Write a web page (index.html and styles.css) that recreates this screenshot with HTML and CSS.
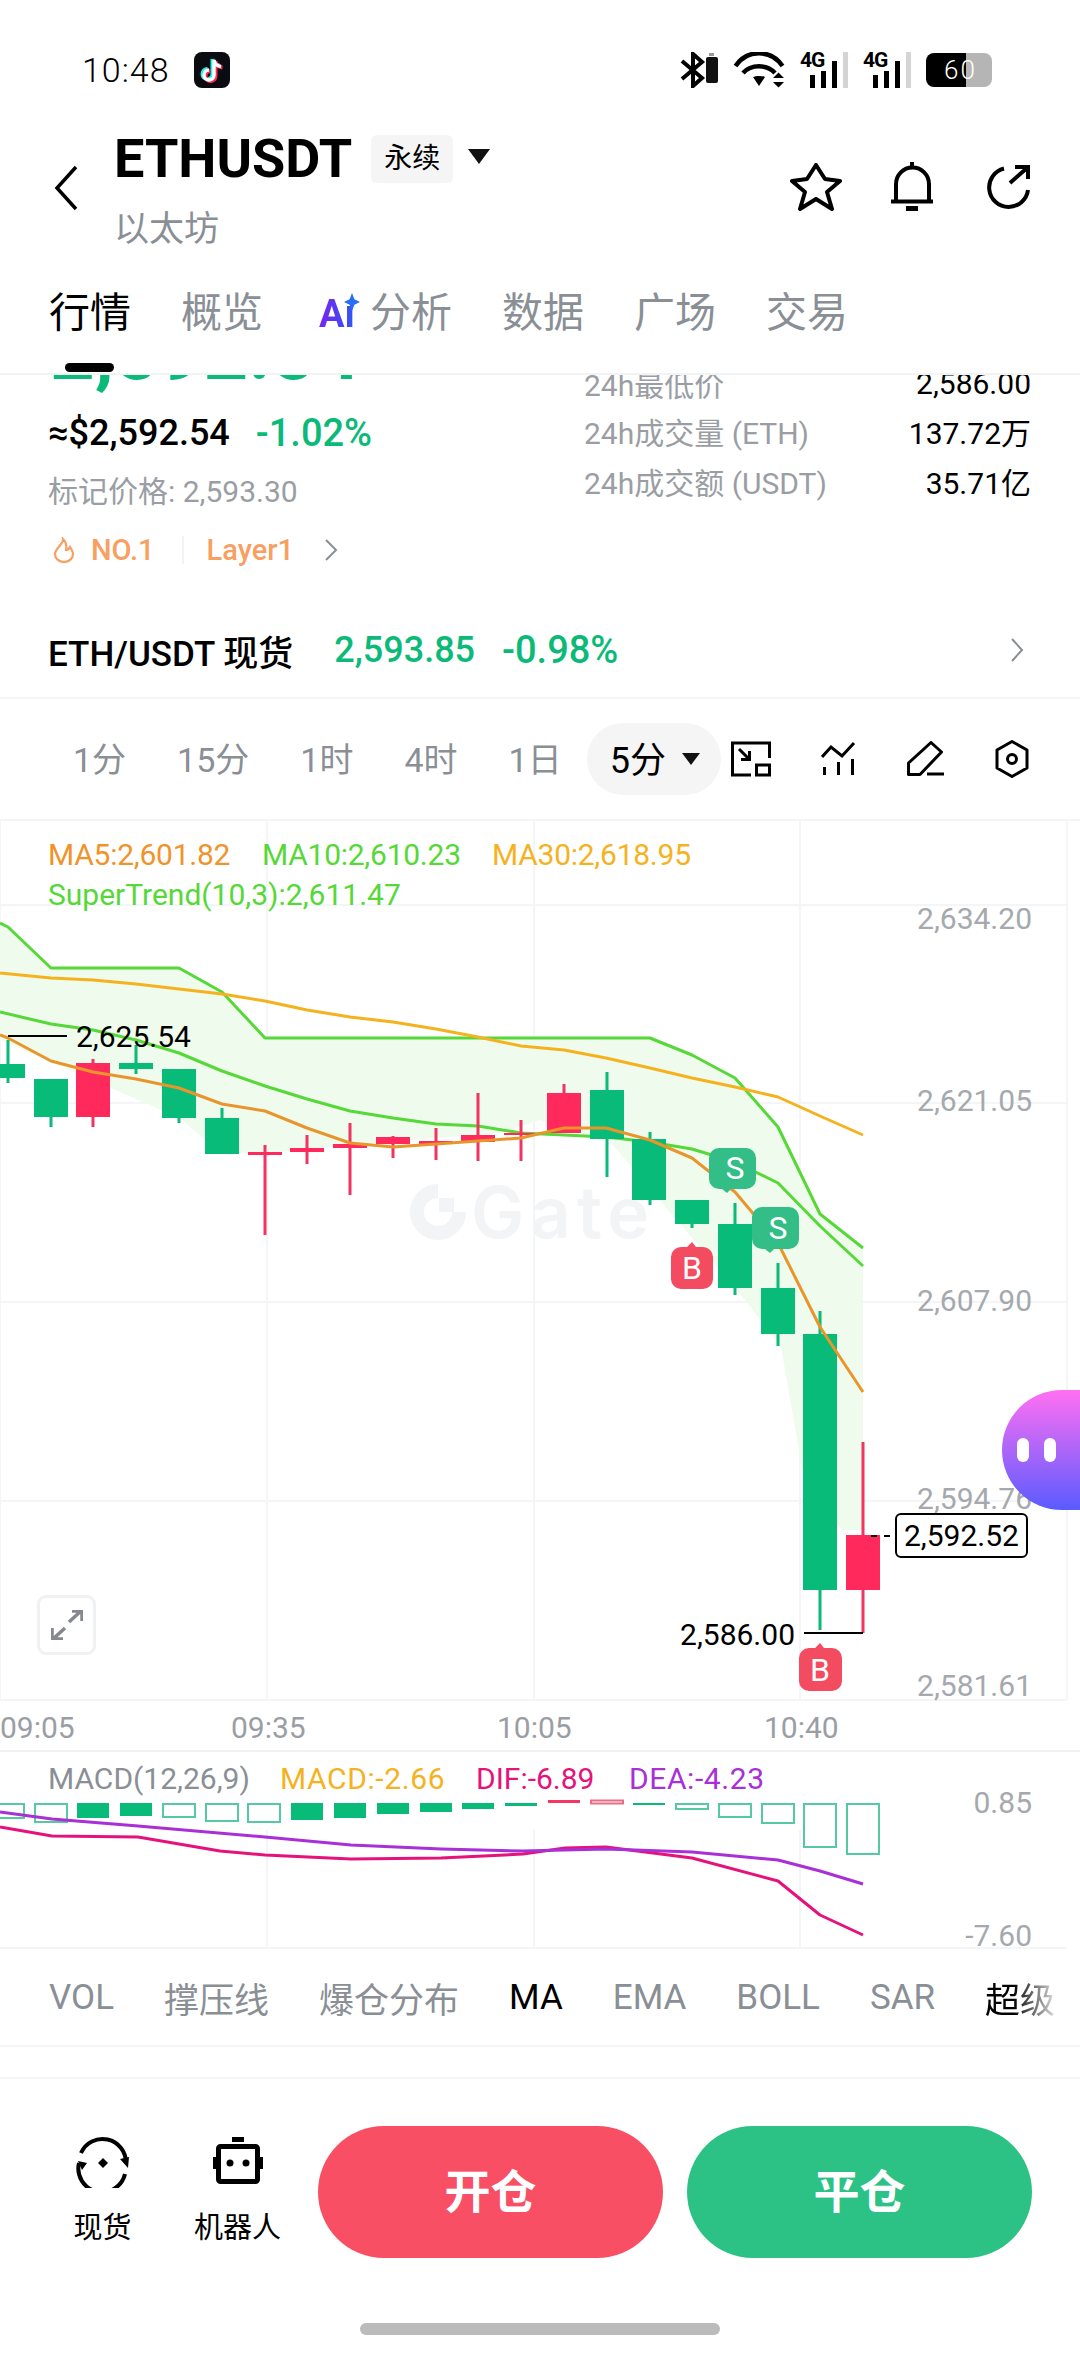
FILE: index.html
```html
<!DOCTYPE html>
<html lang="zh-CN">
<head>
  <meta charset="UTF-8" />
  <title>ETHUSDT 永续</title>
  <link rel="stylesheet" href="styles.css">
</head>
<body>
  <div class="page">

    <!-- status bar -->
    <div class="status">
      <span class="status-time">10:48</span>
      <svg class="tiktok" width="36" height="36" viewBox="0 0 36 36">
        <rect width="36" height="36" rx="8" fill="#0b0b12"/>
        <path d="M20 8v15a5 5 0 1 1-5-5M20 8c.5 4 3 6 7 6.500" fill="none" stroke="#25f4ee" stroke-width="4" transform="translate(-1.500 -1)"/>
        <path d="M20 8v15a5 5 0 1 1-5-5M20 8c.5 4 3 6 7 6.500" fill="none" stroke="#fe2c55" stroke-width="4" transform="translate(1.500 1)"/>
        <path d="M20 8v15a5 5 0 1 1-5-5M20 8c.5 4 3 6 7 6.500" fill="none" stroke="#fff" stroke-width="3.400"/>
      </svg>
      <div class="status-right">
        <svg width="38" height="36" viewBox="0 0 38 36">
          <path d="M2 9l20 17-9 8V2l9 8L2 27" fill="none" stroke="#000" stroke-width="4"/>
          <rect x="26" y="5" width="12" height="26" rx="2" fill="#111"/>
          <rect x="29" y="1" width="5" height="3" fill="#999"/>
        </svg>
        <svg class="wifi" width="52" height="36" viewBox="0 0 52 36">
          <path d="M2.500 14C14-3 38-3 49.500 14M10 21c8-9 24-9 32 0" fill="none" stroke="#000" stroke-width="4.500"/>
          <path d="M20 25c3-1.500 9-1.500 12 0l-6 9z" fill="#000"/>
          <path d="M40 26l5.500-5.500L51 26zM40 30l5.500 5.500L51 30z" fill="#000"/>
        </svg>
        <div class="signal">
          <span class="signal-label">4G</span>
          <i class="bar h1"></i><i class="bar h2"></i><i class="bar h3"></i><i class="bar h4 off"></i>
        </div>
        <div class="signal">
          <span class="signal-label">4G</span>
          <i class="bar h1"></i><i class="bar h2"></i><i class="bar h3"></i><i class="bar h4 off"></i>
        </div>
        <div class="battery"><span class="battery-num">60</span></div>
      </div>
    </div>

    <!-- title -->
    <div class="header">
      <svg class="back" width="24" height="46" viewBox="0 0 24 46">
        <path d="M22 2L3 23l19 21" fill="none" stroke="#000" stroke-width="3.500"/>
      </svg>
      <div class="title-col">
        <div class="title-row">
          <span class="symbol">ETHUSDT</span>
          <span class="perp-tag">永续</span>
          <span class="tri tri-lg"></span>
        </div>
        <div class="coin-name">以太坊</div>
      </div>
      <div class="header-icons">
        <svg width="52" height="48" viewBox="0 0 52 48">
          <path d="M26 2l9 14 15 2-13 11 5 17-16-10-16 10 5-17L2 18l15-2z" fill="none" stroke="#000" stroke-width="4" stroke-linejoin="round"/>
        </svg>
        <svg width="44" height="52" viewBox="0 0 44 52">
          <path d="M6 40V23a16.500 16.500 0 0 1 33 0v17" fill="none" stroke="#000" stroke-width="4"/>
          <path d="M1 40.500h42" stroke="#000" stroke-width="4"/>
          <path d="M22 1v7" stroke="#000" stroke-width="4"/>
          <path d="M16 47.500h12" stroke="#000" stroke-width="5"/>
        </svg>
        <svg class="share" width="46" height="44" viewBox="0 0 46 44">
          <path d="M19 3.500A19.500 19.500 0 1 0 43 25" fill="none" stroke="#000" stroke-width="4"/>
          <path d="M25 18L42 3M30 2h13v12" fill="none" stroke="#000" stroke-width="4"/>
        </svg>
      </div>
    </div>

    <!-- section tabs -->
    <div class="tabs">
      <span class="tab active">行情</span>
      <span class="tab">概览</span>
      <span class="tab tab-ai"><b class="ai-mark">Aı</b>分析</span>
      <span class="tab">数据</span>
      <span class="tab">广场</span>
      <span class="tab">交易</span>
    </div>

    <!-- price summary, scrolled under the tabs -->
    <div class="summary">
      <div class="quote">
        <div class="quote-left">
          <div class="big-price">2,592.54</div>
          <div class="fiat-row">
            <span class="fiat">≈$2,592.54</span>
            <span class="green-num">-1.02%</span>
          </div>
          <div class="mark-price">标记价格: 2,593.30</div>
          <div class="tag-row">
            <svg width="24" height="26" viewBox="0 0 24 26">
              <path d="M11 2c1 5-8 9-8 15a9 8 0 0 0 18 0c0-3-2-5-3-7-1 2-2 3-4 3 1-4 0-8-3-11z" fill="none" stroke="#f7a062" stroke-width="2.200"/>
            </svg>
            <span class="tag-text">NO.1</span>
            <i class="tag-divider"></i>
            <span class="tag-text">Layer1</span>
            <svg class="tag-chevron" width="14" height="22" viewBox="0 0 14 22">
              <path d="M2 1l10 10L2 21" fill="none" stroke="#8a8f96" stroke-width="2"/>
            </svg>
          </div>
        </div>
        <div class="stats">
          <div class="stat"><span class="stat-label">24h最低价</span><span class="stat-value">2,586.00</span></div>
          <div class="stat"><span class="stat-label">24h成交量 (ETH)</span><span class="stat-value">137.72万</span></div>
          <div class="stat"><span class="stat-label">24h成交额 (USDT)</span><span class="stat-value">35.71亿</span></div>
        </div>
      </div>
      <div class="spot-row">
        <span class="spot-name">ETH/USDT 现货</span>
        <span class="spot-price">2,593.85</span>
        <span class="spot-change">-0.98%</span>
        <svg class="spot-chevron" width="14" height="24" viewBox="0 0 14 24">
          <path d="M2 1l10 11L2 23" fill="none" stroke="#8a8f96" stroke-width="2"/>
        </svg>
      </div>
    </div>

    <!-- timeframes -->
    <div class="frames">
      <span class="frame">1分</span>
      <span class="frame">15分</span>
      <span class="frame">1时</span>
      <span class="frame">4时</span>
      <span class="frame">1日</span>
      <span class="frame-pill"><span class="pill-text">5分</span><span class="tri tri-sm"></span></span>
      <svg class="tool" width="40" height="36" viewBox="0 0 40 36">
        <path d="M20 34H1.500V2h37v15" fill="none" stroke="#000" stroke-width="3"/>
        <rect x="25.500" y="24" width="13" height="10" fill="none" stroke="#000" stroke-width="3"/>
        <path d="M8 8l10 10M18.500 10v8.500H10" fill="none" stroke="#000" stroke-width="3"/>
      </svg>
      <svg class="tool" width="36" height="36" viewBox="0 0 36 36">
        <path d="M1 16L10 6l11 9L33 2" fill="none" stroke="#000" stroke-width="3"/>
        <path d="M3.500 26v8M17.500 21v13M31.500 18v16" fill="none" stroke="#000" stroke-width="3"/>
      </svg>
      <svg class="tool" width="38" height="36" viewBox="0 0 38 36">
        <path d="M1.500 22L24 1.500 34.500 11 13 33.500H1.500z" fill="none" stroke="#000" stroke-width="3" stroke-linejoin="round"/>
        <path d="M20 33h17" stroke="#000" stroke-width="3"/>
      </svg>
      <svg class="tool" width="34" height="38" viewBox="0 0 34 38">
        <path d="M17 1.500l15 8.500v18l-15 8.500-15-8.500V10z" fill="none" stroke="#000" stroke-width="3" stroke-linejoin="round"/>
        <circle cx="17" cy="19" r="4.500" fill="none" stroke="#000" stroke-width="3"/>
      </svg>
    </div>

    <!-- main chart: the viewBox uses page coordinates -->
    <div class="chart">
      <svg class="chart-svg" width="1080" height="929" viewBox="0 821 1080 929">
        <g class="grid">
          <path d="M0 905H1067M0 1103H1067M0 1302H1067M0 1501H1067M0 1700H1067"/>
          <path d="M267 821V1700M534 821V1700M800 821V1700M1067 821V1700M0 821V1700"/>
        </g>

        <g class="watermark">
          <path d="M438 1191A21 21 0 1 0 459 1212" fill="none" stroke-width="14"/>
          <rect x="439" y="1198" width="15" height="14"/>
          <text x="471" y="1238" class="watermark-text">Gate</text>
        </g>

        <path class="band" d="M0 923L8 927 51 968H179L222 992 265 1038H650L692 1055 735 1078 778 1127 820 1214 863 1248V1530H842L803 1473 781 1347 745 1300 606 1137 560 1132 540 1120 500 1133 350 1145 250 1155 205 1140 180 1118 0 1040z"/>

        <path class="line st" d="M0 923L8 927 51 968H179L222 992 265 1038H650L692 1055 735 1078 778 1127 820 1214 863 1248"/>
        <path class="line st" d="M0 1012L51 1024 93 1030 136 1040 179 1053 222 1071 265 1086 307 1099 350 1111 393 1118 436 1124 478 1126 521 1133 564 1135 606 1137 650 1142 692 1149 735 1162 778 1183 820 1226 863 1266"/>
        <path class="line ma30" d="M0 973L51 978 93 980 136 984 179 989 222 994 265 1001 307 1010 350 1017 393 1022 436 1029 478 1037 521 1046 564 1050 606 1058 650 1068 692 1078 735 1087 778 1097 820 1116 863 1135"/>

        <path class="wick wick-up" d="M8 1040V1083M51 1117V1127M136 1045V1074M179 1118V1123M222 1108V1118M607 1072V1177M650 1132V1205M692 1224V1228M735 1203V1295M778 1263V1346M820 1311V1630"/>
        <path class="wick wick-down" d="M93 1059V1127M265 1145V1235M307 1135V1164M350 1123V1195M393 1136V1158M436 1128V1160M478 1093V1161M521 1120V1161M564 1084V1133M863 1442V1633"/>
        <g class="candle-up">
          <rect x="-9" y="1064" width="34" height="14"/>
          <rect x="34" y="1079" width="34" height="38"/>
          <rect x="119" y="1063" width="34" height="6"/>
          <rect x="162" y="1069" width="34" height="49"/>
          <rect x="205" y="1118" width="34" height="36"/>
          <rect x="590" y="1090" width="34" height="49"/>
          <rect x="632" y="1139" width="34" height="61"/>
          <rect x="675" y="1200" width="34" height="24"/>
          <rect x="718" y="1224" width="34" height="64"/>
          <rect x="761" y="1288" width="34" height="46"/>
          <rect x="803" y="1334" width="34" height="256"/>
        </g>
        <g class="candle-down">
          <rect x="76" y="1063" width="34" height="54"/>
          <rect x="248" y="1152" width="34" height="3"/>
          <rect x="290" y="1148" width="34" height="4"/>
          <rect x="333" y="1144" width="34" height="4"/>
          <rect x="376" y="1137" width="34" height="7"/>
          <rect x="419" y="1141" width="34" height="3"/>
          <rect x="461" y="1135" width="34" height="7"/>
          <rect x="504" y="1133" width="34" height="2"/>
          <rect x="547" y="1093" width="34" height="40"/>
          <rect x="846" y="1535" width="34" height="55"/>
        </g>

        <path class="line ma5" d="M0 1035L8 1038 51 1061 93 1072 136 1079 179 1088 222 1104 265 1111 307 1128 350 1143 393 1147 436 1144 478 1141 521 1138 564 1128 606 1128 650 1140 692 1158 735 1192 778 1243 820 1327 863 1392"/>

        <text x="48" y="865" class="legend tight ma5-text">MA5:2,601.82</text>
        <text x="262" y="865" class="legend tight st-text">MA10:2,610.23</text>
        <text x="492" y="865" class="legend tight ma30-text">MA30:2,618.95</text>
        <text x="48" y="905" class="legend st-text">SuperTrend(10,3):2,611.47</text>

        <text x="1032" y="929" class="axis">2,634.20</text>
        <text x="1032" y="1111" class="axis">2,621.05</text>
        <text x="1032" y="1311" class="axis">2,607.90</text>
        <text x="1032" y="1509" class="axis">2,594.76</text>
        <text x="1032" y="1696" class="axis">2,581.61</text>

        <path class="pointer" d="M8 1036H67"/>
        <text x="76" y="1047" class="price-note">2,625.54</text>
        <path class="pointer" d="M804 1633H863"/>
        <text x="795" y="1645" class="price-note note-end">2,586.00</text>

        <g class="mark mark-sell">
          <path d="M724 1148h22a10 10 0 0 1 10 10v21a10 10 0 0 1-10 10h-15l-4 4-5-4h-3a10 10 0 0 1-10-10v-21a10 10 0 0 1 10-10z"/>
          <text x="735" y="1179">S</text>
        </g>
        <g class="mark mark-sell">
          <path d="M767 1207h22a10 10 0 0 1 10 10v22a10 10 0 0 1-10 10h-15l-4 4-5-4h-3a10 10 0 0 1-10-10v-22a10 10 0 0 1 10-10z"/>
          <text x="778" y="1239">S</text>
        </g>
        <g class="mark mark-buy">
          <path d="M681 1247h6l5-5 4 5h7a10 10 0 0 1 10 10v22a10 10 0 0 1-10 10h-22a10 10 0 0 1-10-10v-22a10 10 0 0 1 10-10z"/>
          <text x="692" y="1279">B</text>
        </g>
        <g class="mark mark-buy">
          <path d="M809 1648h6l5-5 4 5h8a10 10 0 0 1 10 10v23a10 10 0 0 1-10 10h-23a10 10 0 0 1-10-10v-23a10 10 0 0 1 10-10z"/>
          <text x="820" y="1681">B</text>
        </g>

        <text x="0" y="1738" class="axis-time">09:05</text>
        <text x="231" y="1738" class="axis-time">09:35</text>
        <text x="497" y="1738" class="axis-time">10:05</text>
        <text x="764" y="1738" class="axis-time">10:40</text>
      </svg>

      <div class="last-price"><i class="last-dash"></i><span class="last-box">2,592.52</span></div>
      <div class="expand">
        <svg width="32" height="30" viewBox="0 0 32 30">
          <path d="M18 12L30 1M21 1h10v10M14 18L2 29M1 18v11h11" fill="none" stroke="#85898f" stroke-width="3.500"/>
        </svg>
      </div>
      <div class="float-bot"><i class="bot-eye"></i><i class="bot-eye"></i></div>
    </div>

    <!-- MACD -->
    <div class="macd">
      <svg width="1080" height="198" viewBox="0 1752 1080 198">
        <g class="grid">
          <path d="M267 1830V1948M534 1830V1948M800 1830V1948M0 1948H1067"/>
        </g>
        <text x="48" y="1789" class="legend macd-name">MACD(12,26,9)</text>
        <text x="280" y="1789" class="legend wide ma30-text">MACD:-2.66</text>
        <text x="476" y="1789" class="legend dif-text">DIF:-6.89</text>
        <text x="629" y="1789" class="legend wide dea-text">DEA:-4.23</text>
        <text x="1032" y="1813" class="axis">0.85</text>
        <text x="1032" y="1946" class="axis">-7.60</text>

        <g class="bar-solid">
          <rect x="77" y="1803" width="32" height="15"/>
          <rect x="120" y="1803" width="32" height="13"/>
          <rect x="291" y="1803" width="32" height="17"/>
          <rect x="334" y="1803" width="32" height="15"/>
          <rect x="377" y="1803" width="32" height="11"/>
          <rect x="420" y="1803" width="32" height="9"/>
          <rect x="462" y="1803" width="32" height="6"/>
          <rect x="505" y="1803" width="32" height="3"/>
          <rect x="633" y="1803" width="32" height="2"/>
        </g>
        <g class="bar-hollow">
          <rect x="-8" y="1804" width="32" height="14"/>
          <rect x="35" y="1804" width="32" height="18"/>
          <rect x="163" y="1804" width="32" height="13"/>
          <rect x="206" y="1804" width="32" height="17"/>
          <rect x="248" y="1804" width="32" height="18"/>
          <rect x="676" y="1804" width="32" height="5"/>
          <rect x="719" y="1804" width="32" height="13"/>
          <rect x="762" y="1804" width="32" height="19"/>
          <rect x="804" y="1804" width="32" height="43"/>
          <rect x="847" y="1804" width="32" height="50"/>
        </g>
        <rect class="bar-red" x="548" y="1800" width="32" height="3"/>
        <rect class="bar-red-hollow" x="591" y="1800.500" width="32" height="3"/>

        <path class="line dif" d="M0 1827L52 1836 138 1837 220 1851 265 1855 351 1859 441 1858 523 1854 565 1848 606 1847 692 1858 778 1881 820 1915 863 1935"/>
        <path class="line dea" d="M0 1812L52 1819 138 1826 265 1837 351 1845 441 1849 523 1851 606 1849 692 1852 778 1860 820 1871 863 1884"/>
      </svg>
    </div>

    <!-- indicators -->
    <div class="indicators">
      <span class="ind">VOL</span>
      <span class="ind">撑压线</span>
      <span class="ind">爆仓分布</span>
      <span class="ind on">MA</span>
      <span class="ind">EMA</span>
      <span class="ind">BOLL</span>
      <span class="ind">SAR</span>
      <span class="ind ind-fade">超级</span>
    </div>
    <div class="spacer"></div>

    <!-- bottom actions -->
    <div class="footer">
      <div class="actions">
        <div class="action">
          <svg width="54" height="52" viewBox="0 0 54 52">
            <path d="M5 17A23.500 23.500 0 0 1 50 27M49 38A23.500 23.500 0 0 1 3 27" fill="none" stroke="#000" stroke-width="4"/>
            <path d="M44 23l9-2-1 11zM2 25l9 2-5 7z" fill="#000"/>
            <path d="M27 22l5 5-5 5-5-5z" fill="#000"/>
          </svg>
          <span class="action-label">现货</span>
        </div>
        <div class="action action-bot">
          <svg width="52" height="52" viewBox="0 0 52 52">
            <rect x="20" y="1" width="12" height="5" fill="#000"/>
            <rect x="6.500" y="10.500" width="39" height="35" rx="2" fill="none" stroke="#000" stroke-width="5"/>
            <rect x="1" y="21" width="4" height="12" fill="#000"/>
            <rect x="47" y="21" width="4" height="12" fill="#000"/>
            <circle cx="18" cy="27" r="3.500" fill="#000"/>
            <circle cx="34" cy="27" r="3.500" fill="#000"/>
          </svg>
          <span class="action-label">机器人</span>
        </div>
      </div>
      <div class="btn btn-open">开仓</div>
      <div class="btn btn-close">平仓</div>
    </div>
    <div class="home-bar"></div>
  </div>
</body>
</html>
```

FILE: styles.css
```css
* {
  box-sizing: border-box;
}

body {
  margin: 0;
  background: #fff;
  font-family: Roboto, "Noto Sans CJK SC", sans-serif;
  color: #000;
}

.page {
  width: 1080px;
  height: 2354px;
  overflow: hidden;
  position: relative;
}

svg {
  display: block;
  flex: none;
}

/* status bar */
.status {
  height: 105px;
  padding: 52px 88px 0 82px;
  display: flex;
  align-items: flex-start;
}

.status-time {
  font-size: 34px;
  line-height: 36px;
  font-weight: 300;
  letter-spacing: 1px;
  width: 112px;
}

.status-right {
  margin-left: auto;
  display: flex;
  align-items: center;
  gap: 15px;
  height: 36px;
}

.signal {
  position: relative;
  width: 48px;
  height: 36px;
  display: flex;
  align-items: flex-end;
  gap: 6px;
  padding-left: 10px;
}

.signal-label {
  position: absolute;
  left: 0;
  top: -3px;
  font-size: 21px;
  line-height: 22px;
  font-weight: 700;
  letter-spacing: -1px;
}

.bar {
  width: 5px;
  background: #000;
}

.bar.off {
  background: #d4d4d4;
}

.h1 { height: 13px; }
.h2 { height: 17px; }
.h3 { height: 27px; }
.h4 { height: 36px; }

.battery {
  width: 66px;
  height: 34px;
  border-radius: 8px;
  background: linear-gradient(90deg, #000 60%, #b5b5b5 60%);
  display: flex;
  align-items: center;
  padding-left: 18px;
}

.battery-num {
  color: #fff;
  font-size: 26px;
  font-weight: 300;
  letter-spacing: 2px;
}

/* header */
.header {
  height: 165px;
  padding: 0 49px 0 54px;
  display: flex;
  align-items: center;
}

.back {
  margin-right: 36px;
}

.title-row {
  display: flex;
  align-items: center;
  height: 64px;
}

.symbol {
  font-size: 54px;
  font-weight: 700;
}

.perp-tag {
  margin-left: 19px;
  width: 82px;
  height: 48px;
  background: #f5f5f5;
  border-radius: 6px;
  font-size: 28px;
  line-height: 48px;
  text-align: center;
}

.tri {
  display: inline-block;
  width: 0;
  height: 0;
  border-style: solid;
  border-color: #111 transparent transparent;
}

.tri-lg {
  margin-left: 15px;
  margin-top: -4px;
  border-width: 15px 11px 0;
}

.coin-name {
  font-size: 35px;
  line-height: 44px;
  color: #8a8f96;
  margin-top: 17px;
  margin-bottom: -3px;
}

.header-icons {
  margin-left: auto;
  display: flex;
  align-items: center;
  gap: 48px;
  margin-top: -2px;
}

.share {
  margin-left: 3px;
}

/* tabs */
.tabs {
  height: 105px;
  padding: 13px 0 0 49px;
  display: flex;
  gap: 50px;
  border-bottom: 2px solid #f2f3f4;
}

.tab {
  position: relative;
  height: 60px;
  font-size: 41px;
  line-height: 60px;
  color: #8a8f96;
}

.tab.active {
  color: #000;
}

.tab.active::after {
  content: "";
  position: absolute;
  left: 16px;
  top: 80px;
  width: 49px;
  height: 9px;
  border-radius: 5px;
  background: #000;
}

.tab-ai {
  margin-left: 6px;
}

.ai-mark {
  position: relative;
  display: inline-block;
  width: 51px;
  font-weight: 700;
  font-size: 38px;
  background: linear-gradient(90deg, #7a22f0, #2a5cf5 75%);
  -webkit-background-clip: text;
  background-clip: text;
  color: transparent;
}

.ai-mark::after {
  content: "";
  position: absolute;
  left: 25px;
  top: 9px;
  width: 16px;
  height: 18px;
  background: #2a6cf5;
  clip-path: polygon(50% 0, 65% 35%, 100% 50%, 65% 65%, 50% 100%, 35% 65%, 0 50%, 35% 35%);
}

/* summary */
.summary {
  height: 322px;
  overflow: hidden;
  padding: 0 49px 0 48px;
}

.quote {
  display: flex;
  height: 200px;
}

.quote-left {
  width: 536px;
}

.big-price {
  margin-top: -60px;
  margin-bottom: 17px;
  margin-left: 2px;
  height: 76px;
  font-size: 78px;
  line-height: 76px;
  font-weight: 700;
  color: #0bba78;
}

.fiat-row {
  height: 50px;
  display: flex;
  align-items: center;
  gap: 26px;
}

.fiat {
  font-size: 36px;
  font-weight: 500;
}

.green-num {
  font-size: 38px;
  font-weight: 500;
  color: #0bba78;
}

.mark-price {
  margin-top: 9px;
  height: 50px;
  font-size: 30px;
  line-height: 50px;
  color: #9a9ea4;
}

.tag-row {
  margin-top: 8px;
  height: 50px;
  display: flex;
  align-items: center;
}

.tag-row svg:first-child {
  margin: 0 15px 0 4px;
}

.tag-text {
  font-size: 29px;
  font-weight: 500;
  color: #f7a062;
}

.tag-divider {
  width: 2px;
  height: 28px;
  margin: 0 23px 0 27px;
  background: #f2f3f4;
}

.tag-chevron {
  margin-left: 30px;
}

.stats {
  flex: 1;
  margin-top: -17px;
}

.stat {
  height: 50px;
  display: flex;
  justify-content: space-between;
  align-items: center;
  font-size: 30px;
}

.stat:first-child {
  margin-bottom: -2px;
}

.stat-label {
  color: #9a9ea4;
}

.spot-row {
  margin-top: 50px;
  height: 50px;
  display: flex;
  align-items: center;
  font-size: 36px;
}

.spot-name {
  font-size: 35px;
  font-weight: 500;
}

.spot-price {
  margin-left: 41px;
  font-weight: 500;
  color: #0bba78;
}

.spot-change {
  margin-left: 27px;
  font-size: 38px;
  font-weight: 500;
  color: #0bba78;
}

.spot-chevron {
  margin-left: auto;
  margin-right: 7px;
}

/* timeframes */
.frames {
  height: 124px;
  padding-left: 73px;
  display: flex;
  align-items: center;
  gap: 51px;
  border-top: 2px solid #f5f5f6;
  border-bottom: 2px solid #f5f5f6;
}

.frame {
  margin-top: -4px;
  font-size: 34px;
  color: #8a8f96;
}

.frame-pill {
  margin-left: -26px;
  margin-right: -40px;
  width: 134px;
  height: 72px;
  padding-left: 23px;
  border-radius: 36px;
  background: #f5f5f6;
  display: flex;
  align-items: center;
}

.pill-text {
  margin-top: -4px;
  font-size: 36px;
}

.tri-sm {
  margin-left: 16px;
  border-width: 12px 9px 0;
}

.tool {
  margin-left: -1px;
}

/* main chart */
.chart {
  position: relative;
  height: 929px;
}

.chart-svg text {
  font-family: Roboto, sans-serif;
}

.grid path {
  fill: none;
  stroke: #f4f5f6;
  stroke-width: 2;
}

.watermark {
  stroke: #f3f4f5;
  fill: #f3f4f5;
}

.watermark rect {
  stroke: none;
}

.chart-svg .watermark-text {
  stroke: none;
  font-family: Inter, sans-serif;
  font-size: 71px;
  font-weight: 600;
  letter-spacing: 6px;
}

.band {
  fill: #effbec;
}

.line {
  fill: none;
  stroke-width: 3;
  stroke-linejoin: round;
}

.st { stroke: #56d838; }
.ma30 { stroke: #f5b21f; }
.ma5 { stroke: #e8962c; }
.dif { stroke: #e6127c; }
.dea { stroke: #a92fd6; }

.wick {
  fill: none;
  stroke-width: 3;
}

.wick-up { stroke: #0bba78; }
.wick-down { stroke: #ef3560; }
.candle-up { fill: #08bb78; }
.candle-down { fill: #ff2a5b; }

.legend {
  font-size: 30px;
}

.legend.tight {
  letter-spacing: -0.25px;
}

.legend.wide {
  letter-spacing: 0.6px;
}

.ma5-text { fill: #f0932b; }
.st-text { fill: #56d838; }
.ma30-text { fill: #f5b21f; }
.dif-text { fill: #e6127c; }
.dea-text { fill: #a92fd6; }
.macd-name { fill: #8a8f96; }

.axis {
  font-size: 30px;
  fill: #a5a9ae;
  text-anchor: end;
}

.axis-time {
  font-size: 30px;
  fill: #9a9ea4;
}

.pointer {
  stroke: #000;
  stroke-width: 2;
}

.price-note {
  font-size: 30px;
  fill: #000;
}

.note-end {
  text-anchor: end;
}

.mark text {
  font-size: 32px;
  fill: #fff;
  text-anchor: middle;
}

.mark-sell path { fill: #33bd87; }
.mark-buy path { fill: #f34b60; }

.last-price {
  position: absolute;
  left: 871px;
  top: 692px;
  display: flex;
  align-items: center;
}

.last-dash {
  width: 19px;
  height: 0;
  margin-right: 5px;
  border-top: 2px dashed #000;
}

.last-box {
  width: 133px;
  height: 45px;
  border: 2px solid #000;
  border-radius: 6px;
  background: #fff;
  font-size: 30px;
  line-height: 41px;
  text-align: center;
}

.expand {
  position: absolute;
  left: 37px;
  top: 774px;
  width: 59px;
  height: 60px;
  border: 3px solid #f0f1f2;
  border-radius: 9px;
  display: flex;
  align-items: center;
  justify-content: center;
}

.float-bot {
  position: absolute;
  left: 1002px;
  top: 569px;
  width: 78px;
  height: 120px;
  padding-left: 15px;
  border-radius: 60px 0 0 60px;
  background: linear-gradient(180deg, #ff70f2, #5a5bff);
  display: flex;
  align-items: center;
  gap: 15px;
}

.bot-eye {
  width: 12px;
  height: 24px;
  border-radius: 6px;
  background: #fff;
}

/* macd */
.macd {
  height: 200px;
  border-top: 2px solid #f2f3f4;
}

.macd text {
  font-family: Roboto, sans-serif;
}

.bar-solid { fill: #08bb78; }

.bar-hollow {
  fill: #fff;
  stroke: #55c9a2;
  stroke-width: 2;
}

.bar-red { fill: #f5365f; }

.bar-red-hollow {
  fill: #fff;
  stroke: #ef6a85;
  stroke-width: 2;
}

/* indicators */
.indicators {
  height: 97px;
  padding-left: 49px;
  display: flex;
  align-items: center;
  gap: 50px;
  border-bottom: 2px solid #f5f5f6;
  font-size: 35px;
  color: #8a8f96;
  white-space: nowrap;
}

.ind.on {
  color: #000;
}

.ind-fade {
  background: linear-gradient(90deg, #000 40%, #ddd 100%);
  -webkit-background-clip: text;
  background-clip: text;
  color: transparent;
}

.spacer {
  height: 32px;
  border-bottom: 2px solid #f5f5f6;
}

/* footer */
.footer {
  margin-top: 47px;
  padding-left: 74px;
  height: 132px;
  display: flex;
  align-items: flex-start;
}

.actions {
  width: 244px;
  display: flex;
  gap: 63px;
}

.action {
  display: flex;
  flex-direction: column;
  align-items: center;
  padding-top: 10px;
  width: 57px;
}

.action-bot {
  width: 87px;
}

.action-label {
  margin-top: 23px;
  font-size: 29px;
  line-height: 34px;
  white-space: nowrap;
}

.btn {
  width: 345px;
  height: 132px;
  border-radius: 66px;
  color: #fff;
  font-size: 46px;
  font-weight: 700;
  line-height: 132px;
  text-align: center;
}

.btn-open {
  background: #f94f64;
}

.btn-close {
  margin-left: 24px;
  background: #2cc286;
}

.home-bar {
  width: 360px;
  height: 12px;
  margin: 65px auto 0;
  border-radius: 6px;
  background: #bbb;
}
```
